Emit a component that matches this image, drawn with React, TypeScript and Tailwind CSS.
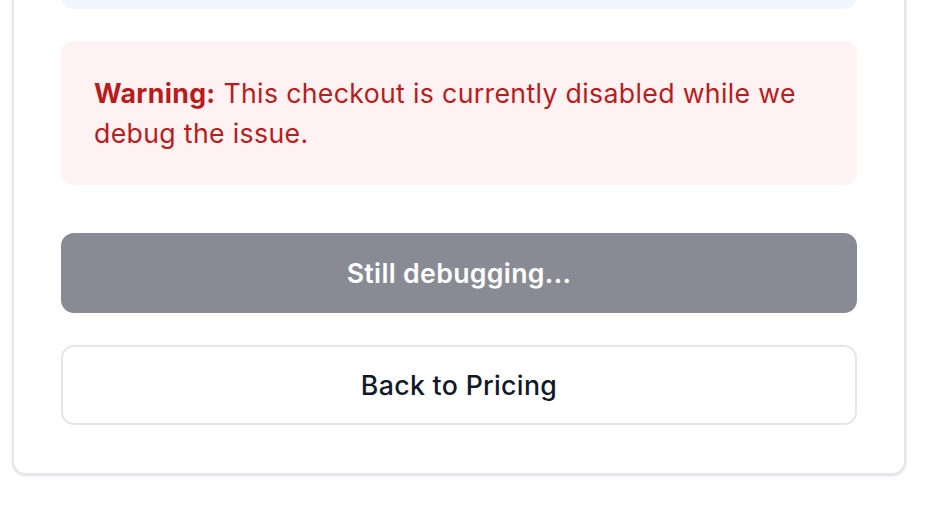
export default function App() {
  return (
    <div className="min-h-screen bg-white font-['Inter',sans-serif] tracking-[0.33px] overflow-hidden">
      <div className="ml-[12px] w-[894px] -mt-[101px] rounded-[14px] border-2 border-[#e3e6ef] bg-white px-[47px] pt-[48px] pb-[48px] shadow-sm">
        {/* info box (scrolled off top) */}
        <div className="h-[60px] rounded-[13px] bg-[#eff6ff]" />

        {/* warning */}
        <p className="mt-[32px] rounded-[13px] bg-[#fef2f2] px-[33px] py-[32px] text-[26.7px] leading-[40px] text-[#b91c1c]">
          <strong className="font-bold">Warning:</strong> This checkout is
          currently disabled while we debug the issue.
        </p>

        {/* actions */}
        <button
          disabled
          className="mt-[48px] flex h-[80px] w-full items-center justify-center rounded-[13px] bg-[#888b93] text-[26.7px] font-semibold text-white"
        >
          Still debugging...
        </button>
        <button className="mt-[32px] flex h-[80px] w-full items-center justify-center rounded-[13px] border-2 border-[#e3e6ef] bg-white text-[26.7px] font-medium text-[#111827]">
          Back to Pricing
        </button>
      </div>
    </div>
  );
}
